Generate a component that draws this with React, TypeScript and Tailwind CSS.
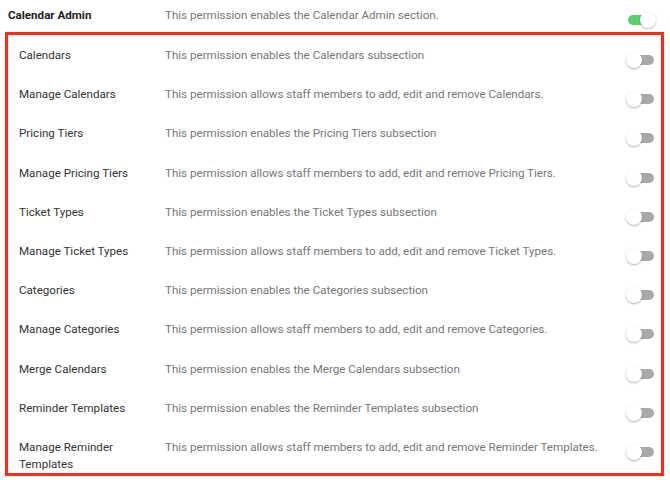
const rows = [
  { label: "Calendars", text: "This permission enables the Calendars subsection" },
  { label: "Manage Calendars", text: "This permission allows staff members to add, edit and remove Calendars." },
  { label: "Pricing Tiers", text: "This permission enables the Pricing Tiers subsection" },
  { label: "Manage Pricing Tiers", text: "This permission allows staff members to add, edit and remove Pricing Tiers." },
  { label: "Ticket Types", text: "This permission enables the Ticket Types subsection" },
  { label: "Manage Ticket Types", text: "This permission allows staff members to add, edit and remove Ticket Types." },
  { label: "Categories", text: "This permission enables the Categories subsection" },
  { label: "Manage Categories", text: "This permission allows staff members to add, edit and remove Categories." },
  { label: "Merge Calendars", text: "This permission enables the Merge Calendars subsection" },
  { label: "Reminder Templates", text: "This permission enables the Reminder Templates subsection" },
  { label: "Manage Reminder Templates", text: "This permission allows staff members to add, edit and remove Reminder Templates." },
];

const Toggle = ({ on }: { on?: boolean }) => {
  return (
    <div className="relative h-[16px] w-[29px] shrink-0">
      <div className={`absolute left-[1px] top-[3px] h-[10px] w-[27px] rounded-full ${on ? "bg-[#55d466]" : "bg-[#a9a9a9]"}`}></div>
      <div
        className={`absolute top-0 h-[16px] w-[16px] rounded-full bg-white shadow-[0_1px_2px_rgba(0,0,0,0.3)] ${on ? "left-[13px]" : "left-0"}`}
      ></div>
    </div>
  );
};

const App = () => {
  return (
    <div className="h-[480px] w-[670px] bg-white font-['Roboto','Liberation_Sans',sans-serif] text-[11.6px] leading-[17px]">
      {/* section header */}
      <div className="flex h-[32px] items-start pl-[8px] pt-[7px]">
        <div className="w-[157px] font-bold text-[#222]">Calendar Admin</div>
        <div className="flex-1 text-[#777]">This permission enables the Calendar Admin section.</div>
        <div className="mr-[14px] mt-[5px]">
          <Toggle on />
        </div>
      </div>

      {/* sub permissions */}
      <div className="ml-[5px] w-[659px] border-[3px] border-[#ff2b17]">
        {rows.map((row) => (
          <div key={row.label} className="flex min-h-[39.2px] items-start pl-[11px] pt-[12px]">
            <div className="w-[146px] pr-[12px] text-[#333]">{row.label}</div>
            <div className="flex-1 text-[#777]">{row.text}</div>
            <div className="mr-[6px] mt-[5px]">
              <Toggle />
            </div>
          </div>
        ))}
      </div>
    </div>
  );
};

export default App;
